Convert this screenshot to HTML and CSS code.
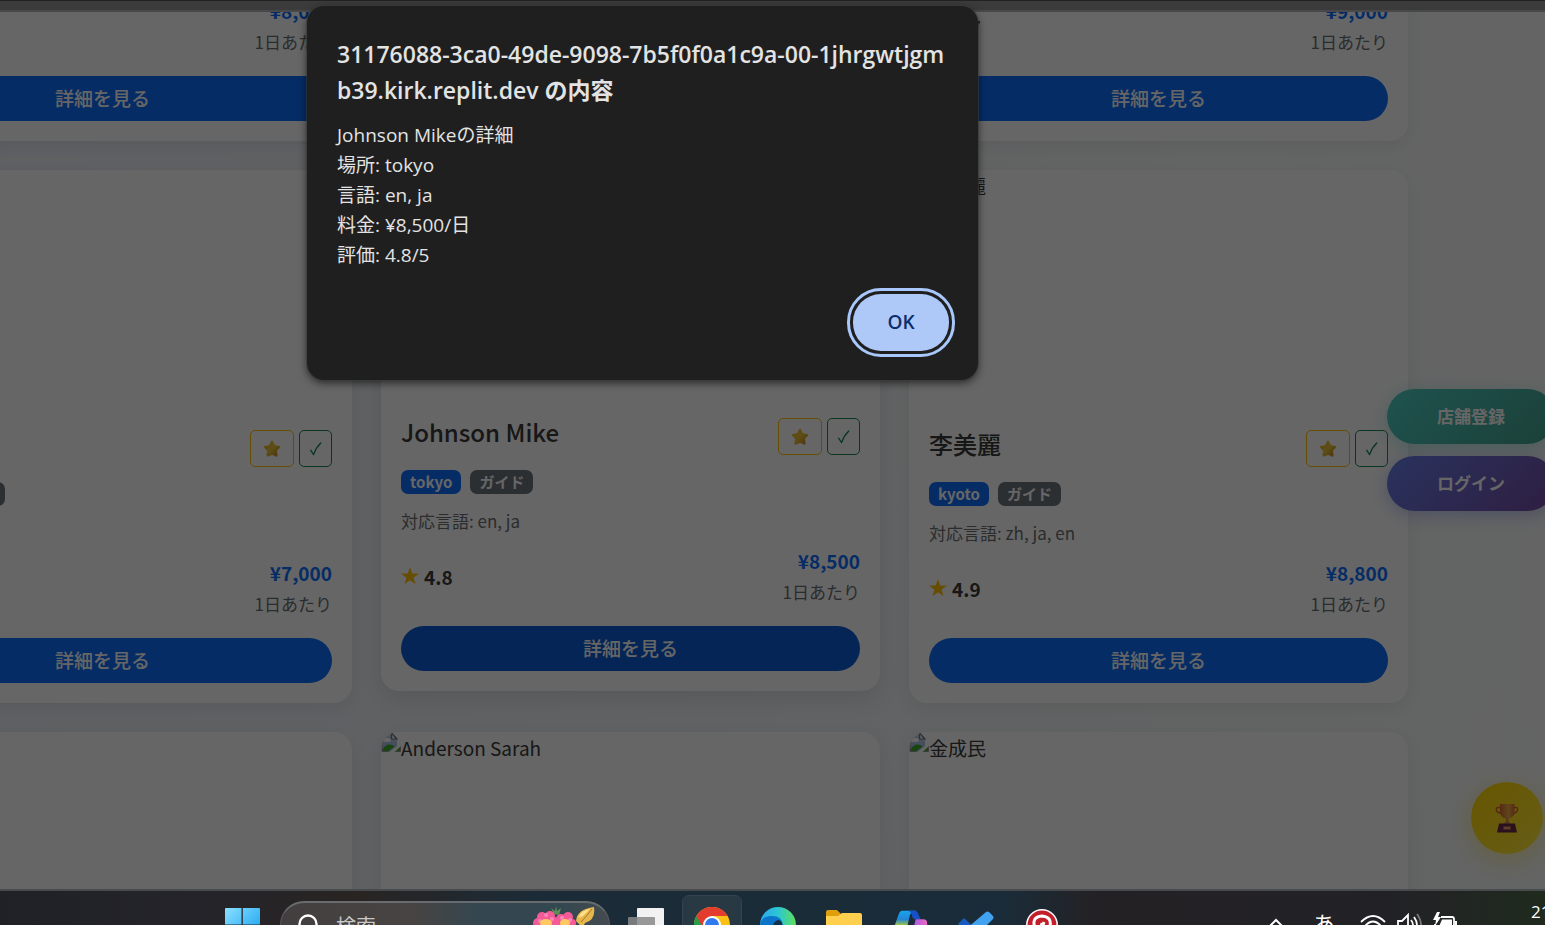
FILE: index.html
```html
<!DOCTYPE html>
<html lang="ja">
<head>
<meta charset="utf-8">
<title>ガイド一覧</title>
<link rel="stylesheet" href="styles.css">
</head>
<body>
<svg class="sprite" aria-hidden="true">
  <defs>
    <linearGradient id="g-star" x1="0" y1="0" x2="1" y2="1"><stop offset="0" stop-color="#f2b52d"/><stop offset=".5" stop-color="#e8c234"/><stop offset="1" stop-color="#c9832a"/></linearGradient>
    <linearGradient id="g-cup" x1="0" y1="0" x2="1" y2="0"><stop offset="0" stop-color="#d8662f"/><stop offset=".6" stop-color="#efb04a"/><stop offset="1" stop-color="#d8662f"/></linearGradient>
    <linearGradient id="g-sky" x1="0" y1="0" x2="0" y2="1"><stop offset="0" stop-color="#c5d3f3"/><stop offset="1" stop-color="#9fb4e4"/></linearGradient>
  </defs>
  <symbol id="star-emoji" viewBox="0 0 20 20"><path d="M10 2.800 12.200 7.200 17 8 13.800 11.500 14.500 16.600 10 14.700 5.500 16.600 6.200 11.500 3 8 7.800 7.200Z" fill="url(#g-star)" stroke="url(#g-star)" stroke-width="2.200" stroke-linejoin="round"/></symbol>
  <symbol id="check" viewBox="0 0 14 16"><path d="M1.600 9.200 4.600 13.600 Q7 6.500 11.800 2" fill="none" stroke="currentColor" stroke-width="1.300" stroke-linecap="round" stroke-linejoin="round"/></symbol>
  <symbol id="rate-star" viewBox="0 0 18 18"><path d="M9 0 11.200 6.600H18L12.500 10.700 14.600 17.300 9 13.300 3.400 17.300 5.500 10.700 0 6.600H6.800Z" fill="#ffc107"/></symbol>
  <symbol id="broken" viewBox="0 0 20 20"><path d="M1 1H11L16 6V14L8 20H1Z" fill="url(#g-sky)"/><path d="M1 19.500Q3 13 8 12.500 12 12.500 13.500 14.500L7 19.500Z" fill="#3fae2a"/><path d="M16 19.500H14L19.500 14.500V19.500Z" fill="#3fae2a"/><path d="M1 1V19.500H7M14 19.500H19.500V14.500M1 1H11" fill="none" stroke="#999"/><path d="M10.500 1V7H16Z" fill="#eee" stroke="#777" stroke-width="1.200"/><ellipse cx="6" cy="8" rx="4" ry="2" fill="#fff"/></symbol>
</svg>

<div class="browser-bar"></div>

<main class="viewport">
  <section class="cards">
    <article class="card card-cut">
      <div class="card-body">
        <div class="meta"><span></span><div class="price-box"><div class="price">¥8,000</div><div class="per">1日あたり</div></div></div>
        <button class="detail">詳細を見る</button>
      </div>
    </article>
    <article class="card card-cut">
      <div class="card-body">
        <div class="meta"><span></span></div>
        <button class="detail">詳細を見る</button>
      </div>
    </article>
    <article class="card card-cut">
      <div class="card-body">
        <div class="meta"><div class="rating"><svg><use href="#rate-star"/></svg>4.7</div><div class="price-box"><div class="price">¥9,000</div><div class="per">1日あたり</div></div></div>
        <button class="detail">詳細を見る</button>
      </div>
    </article>

    <article class="card">
      <div class="photo"></div>
      <div class="card-body">
        <div class="head"><span></span><div class="acts"><button class="act fav" aria-label="お気に入り"><svg><use href="#star-emoji"/></svg></button><button class="act pick" aria-label="選択"><svg><use href="#check"/></svg></button></div></div>
        <div class="badges badges-cut"><span class="badge role">ガイド</span></div>
        <p class="langs"></p>
        <div class="meta"><span></span><div class="price-box"><div class="price">¥7,000</div><div class="per">1日あたり</div></div></div>
        <button class="detail">詳細を見る</button>
      </div>
    </article>
    <article class="card hovered">
      <div class="photo"></div>
      <div class="card-body">
        <div class="head"><h2>Johnson Mike</h2><div class="acts"><button class="act fav" aria-label="お気に入り"><svg><use href="#star-emoji"/></svg></button><button class="act pick" aria-label="選択"><svg><use href="#check"/></svg></button></div></div>
        <div class="badges"><span class="badge">tokyo</span><span class="badge role">ガイド</span></div>
        <p class="langs">対応言語: en, ja</p>
        <div class="meta"><div class="rating"><svg><use href="#rate-star"/></svg>4.8</div><div class="price-box"><div class="price">¥8,500</div><div class="per">1日あたり</div></div></div>
        <button class="detail">詳細を見る</button>
      </div>
    </article>
    <article class="card">
      <div class="photo"><svg><use href="#broken"/></svg>李美麗</div>
      <div class="card-body">
        <div class="head"><h2>李美麗</h2><div class="acts"><button class="act fav" aria-label="お気に入り"><svg><use href="#star-emoji"/></svg></button><button class="act pick" aria-label="選択"><svg><use href="#check"/></svg></button></div></div>
        <div class="badges"><span class="badge">kyoto</span><span class="badge role">ガイド</span></div>
        <p class="langs">対応言語: zh, ja, en</p>
        <div class="meta"><div class="rating"><svg><use href="#rate-star"/></svg>4.9</div><div class="price-box"><div class="price">¥8,800</div><div class="per">1日あたり</div></div></div>
        <button class="detail">詳細を見る</button>
      </div>
    </article>

    <article class="card"><div class="photo"></div></article>
    <article class="card"><div class="photo"><svg><use href="#broken"/></svg>Anderson Sarah</div></article>
    <article class="card"><div class="photo"><svg><use href="#broken"/></svg>金成民</div></article>
  </section>

  <nav class="side">
    <button class="side-btn shop">店舗登録</button>
    <button class="side-btn login">ログイン</button>
  </nav>
  <button class="trophy" aria-label="ランキング">
    <svg viewBox="0 0 24 30"><path d="M6 4.500H3Q1 4.500 1.400 7 2 10 7 10.500M18 4.500H21Q23 4.500 22.600 7 22 10 17 10.500" fill="none" stroke="#d8662f" stroke-width="1.400"/><path d="M5 1H19.500V8Q19.500 14 14 15.500H10.500Q5 14 5 8Z" fill="url(#g-cup)"/><path d="M11 15H13.500L13.500 18 15.500 21H8.500L11 18Z" fill="#e08a3c"/><path d="M4 20.500H20L22 29.500H2Z" fill="#6b2b4b"/><path d="M8.500 23.500H15.500V26.500H8.500Z" fill="#e0a070" stroke="#a85a50"/></svg>
  </button>
  <div class="scrim"></div>
</main>

<dialog class="alert" open aria-labelledby="alert-title">
  <h1 id="alert-title">31176088-3ca0-49de-9098-7b5f0f0a1c9a-00-1jhrgwtjgm<br>b39.kirk.replit.dev の内容</h1>
  <p>Johnson Mikeの詳細<br>場所: tokyo<br>言語: en, ja<br>料金: ¥8,500/日<br>評価: 4.8/5</p>
  <div class="alert-actions"><button class="ok">OK</button></div>
</dialog>

<footer class="taskbar">
  <div class="task-row">
    <button class="slot" aria-label="スタート"><svg viewBox="0 0 36 36"><defs><linearGradient id="g-win" x1="0" y1="0" x2="1" y2="1"><stop offset="0" stop-color="#8be0ff"/><stop offset="1" stop-color="#0a9bf0"/></linearGradient></defs><path d="M1 2Q1 1 2 1H17.500V17.500H1ZM18.800 1H35Q36 1 36 2V17.500H18.800ZM1 18.800H17.500V35H1ZM18.800 18.800H36V35H18.800Z" fill="url(#g-win)"/></svg></button>
    <label class="search">
      <svg class="lens" viewBox="0 0 24 24"><circle cx="13" cy="10" r="8.500" fill="none" stroke="#fff" stroke-width="2.400"/><path d="M7 17 1 23" stroke="#fff" stroke-width="2.400"/></svg>
      <input type="text" placeholder="検索" aria-label="検索">
      <svg class="bloom" viewBox="0 0 66 40">
        <path d="M22 8 19 2 23 5 24 0 25 5 29 2 27 9Z" fill="#5c8f55"/>
        <g fill="#f45a98"><circle cx="6" cy="17" r="5"/><circle cx="10" cy="11" r="5"/><circle cx="18" cy="10" r="5"/><circle cx="22" cy="16" r="5"/><circle cx="29" cy="13" r="5"/><circle cx="36" cy="11" r="5"/><circle cx="40" cy="17" r="4"/><circle cx="14" cy="21" r="11"/><circle cx="33" cy="21" r="10"/></g>
        <g fill="#ff86b4"><circle cx="8" cy="15" r="2"/><circle cx="14" cy="9" r="2"/><circle cx="20" cy="13" r="2"/><circle cx="30" cy="12" r="2"/><circle cx="38" cy="14" r="2"/></g>
        <ellipse cx="14" cy="17" rx="6" ry="4" fill="#ffc861"/><ellipse cx="33" cy="17" rx="5" ry="4" fill="#ffc861"/>
        <path d="M44 15Q45 3 62 1 64 14 53 17L50 23 47 18Z" fill="#e6b74c"/><path d="M49 16Q54 11 60 3" fill="none" stroke="#a87722"/><path d="M46 12Q49 4 58 3L51 10Z" fill="#ffe08a"/>
      </svg>
    </label>
    <button class="slot" aria-label="タスクビュー"><svg viewBox="0 0 36 36"><rect x="9" y="1" width="27" height="24" rx="1" fill="#f2f2f2"/><rect x="0" y="10" width="27" height="22" rx="1" fill="#888" opacity=".85"/></svg></button>
    <button class="slot active" aria-label="Chrome"><svg viewBox="0 0 36 36"><circle cx="18" cy="18" r="18" fill="#fbc116"/><path d="M18 18 2.400 9A18 18 0 0 0 18 36L26 22Z" fill="#2a9d48"/><path d="M18 18 2.400 9A18 18 0 0 1 33.600 9H18Z" fill="#e33b2e"/><path d="M2.400 9 10.200 22.500 18 9Z" fill="#e33b2e"/><circle cx="18" cy="18" r="9" fill="#fff"/><circle cx="18" cy="18" r="7" fill="#3079ee"/></svg></button>
    <button class="slot" aria-label="Edge"><svg viewBox="0 0 36 36"><defs><linearGradient id="g-edge"><stop offset="0" stop-color="#2aa8ee"/><stop offset=".5" stop-color="#2cc6d4"/><stop offset="1" stop-color="#5fe05a"/></linearGradient></defs><circle cx="18" cy="18" r="18" fill="url(#g-edge)"/><path d="M0 18Q1 9 12 9 22 9 23 18L20 24 36 26A18 18 0 0 1 0 18Z" fill="#0c75c9"/><path d="M13 20Q13 14 19 13 23 15 22 19L19 24Z" fill="#173049"/></svg></button>
    <button class="slot" aria-label="エクスプローラー"><svg viewBox="0 0 36 36"><path d="M0 5Q0 3 2 3H11L15 7H20V12H0Z" fill="#df9e0b"/><path d="M0 9H12L16 6H34Q36 6 36 8V32H0Z" fill="#ffcf4d"/></svg></button>
    <button class="slot" aria-label="Copilot"><svg viewBox="0 0 38 36"><defs><linearGradient id="g-co" x1="0" y1="0" x2="0" y2="1"><stop offset="0" stop-color="#18a3f0"/><stop offset=".35" stop-color="#2386d5"/><stop offset=".6" stop-color="#a8c93c"/></linearGradient><linearGradient id="g-pk"><stop offset="0" stop-color="#9b57f0"/><stop offset="1" stop-color="#ea6ac0"/></linearGradient></defs><path d="M11 3H25L19 7 14 29H2Q0 25 3 18L7 7Q8 3 11 3Z" fill="url(#g-co)"/><path d="M18 3H24Q27 3 28 7L30 12H24Q21 11 21 7Z" fill="#174fc8"/><path d="M25 12H33Q38 12 37 18L33 32H20Z" fill="url(#g-pk)"/></svg></button>
    <button class="slot" aria-label="To Do"><svg viewBox="0 0 36 36"><path d="M0 17 6 11 18 22 12 28Z" fill="#185abd"/><path d="M12 28 8 22 28 5Q29.500 4 31 5L35 9Q36 10.500 35 12L16 31Z" fill="#41a3ef"/></svg></button>
    <button class="slot" aria-label="Pinterest"><svg viewBox="0 0 36 36"><circle cx="18" cy="18" r="16" fill="#fff"/><circle cx="18" cy="18" r="14.500" fill="#c31f2a"/><path d="M11 21Q7 10 18 9 28 10 26 19 23 25 18 21L20 15M18 16 15 30" fill="none" stroke="#fff" stroke-width="3"/></svg></button>
    <div class="tray">
      <svg class="chev" viewBox="0 0 14 14"><path d="M1 8 7 2 13 8" fill="none" stroke="#fff" stroke-width="2"/></svg>
      <span class="ime">あ</span>
      <svg class="status" viewBox="0 0 26 26"><path d="M1 10Q13-2 25 10M5 14Q13 5 21 14M9 18Q13 14 17 18" fill="none" stroke="#fff" stroke-width="1.800"/></svg>
      <svg class="status" viewBox="0 0 26 26"><path d="M2 9H6L12 3V23L6 17H2Z" fill="none" stroke="#fff" stroke-width="1.800"/><path d="M15 8Q19 13 15 18" fill="none" stroke="#fff" stroke-width="1.800"/><path d="M18 5Q24 13 18 21" fill="none" stroke="#fff" stroke-width="1.800"/><path d="M21 2Q29 13 21 24" fill="none" stroke="#777" stroke-width="1.800"/></svg>
      <svg class="status" viewBox="0 0 26 26"><path d="M9 5H20Q22 5 22 7V17Q22 19 20 19H3V12" fill="none" stroke="#fff" stroke-width="1.800"/><path d="M10 7.500H20V17H6Z" fill="#fff"/><path d="M23 9H25V15H23Z" fill="#fff"/><path d="M5 0 1 8H4L3 14 9 5H6L8 0Z" fill="#fff"/></svg>
      <span class="clock">21</span>
    </div>
  </div>
</footer>
</body>
</html>
```
FILE: styles.css
```css
* { box-sizing: border-box; }

body {
  margin: 0;
  height: 100vh;
  display: flex;
  flex-direction: column;
  overflow: hidden;
  background: #3b3b3b;
  color: #3a3a3a;
  font-family: "Noto Sans CJK JP", sans-serif;
  font-size: 19px;
  line-height: 29px;
}

button { font: inherit; cursor: pointer; }
h1, h2, p { margin: 0; }
.sprite { position: absolute; width: 0; height: 0; }

.browser-bar {
  flex: none;
  height: 12px;
  border-top: 1px solid #222;
  border-bottom: 2px solid #484848;
}

/* Page content */
.viewport {
  position: relative;
  flex: 1;
  min-height: 0;
  overflow: hidden;
  background:
    radial-gradient(circle at 80% 20%, rgba(255, 255, 255, .4), transparent 60%),
    linear-gradient(90deg, #eef1f8, #f3f6f8 60%, #f8faf9);
}

.cards {
  display: grid;
  grid-template-columns: repeat(3, minmax(0, 1fr));
  gap: 29px;
  margin: -15px 137px 0 -147px;
}

.card {
  background: #fff;
  border-radius: 18px;
  box-shadow: 0 5px 20px rgba(0, 0, 0, .08);
  overflow: hidden;
}

.hovered {
  transform: translateY(-12px);
  box-shadow: 0 8px 24px rgba(0, 0, 0, .1);
}

.photo {
  display: flex;
  height: 240px;
  line-height: 32px;
}
.photo svg { width: 20px; height: 20px; flex: none; }

.card-body {
  display: flex;
  flex-direction: column;
  padding: 20px;
}
.card-cut { border-radius: 0 0 18px 18px; }
.card-cut .card-body { padding-top: 0; }

.head {
  display: flex;
  justify-content: space-between;
  height: 37px;
  margin-bottom: 15px;
}
.head h2 { font-size: 24px; line-height: 28px; font-weight: 500; }

.acts { display: flex; gap: 5px; }
.act {
  display: flex;
  align-items: center;
  justify-content: center;
  height: 37px;
  padding: 0;
  background: none;
  border: 1px solid;
  border-radius: 5px;
}
.fav { width: 44px; color: #ffc107; }
.fav svg { width: 20px; height: 20px; }
.pick { width: 33px; color: #198754; }
.pick svg { width: 14px; height: 16px; }

.badges { display: flex; gap: 9px; height: 24px; margin-bottom: 14px; }
.badges-cut { padding-left: 69px; }
.badge {
  padding: 0 9px;
  border-radius: 7px;
  background: #0d6efd;
  color: #fff;
  font-size: 15px;
  line-height: 24px;
  font-weight: 700;
}
.role { background: #6c757d; }

.langs {
  height: 28px;
  margin-bottom: 11px;
  color: #6c6f72;
  font-size: 17px;
  line-height: 26px;
}

.meta {
  display: flex;
  align-items: center;
  justify-content: space-between;
  height: 60px;
  margin-bottom: 19px;
}
.rating { display: flex; align-items: center; gap: 5px; line-height: 27px; padding-bottom: 2px; font-weight: 700; }
.rating svg { width: 18px; height: 18px; }
.price-box { text-align: right; }
.price { color: #0d6efd; font-weight: 700; }
.per { color: #6c6f72; font-size: 17px; line-height: 33px; }

.detail {
  height: 45px;
  padding: 0 0 2px;
  border: 0;
  border-radius: 23px;
  background: #0d6efd;
  color: #fff;
  font-weight: 500;
}
.hovered .detail { background: #0b5ed7; }

.side {
  position: absolute;
  right: -10px;
  top: 377px;
  display: flex;
  flex-direction: column;
  gap: 12px;
}
.side-btn {
  width: 168px;
  height: 55px;
  padding: 0 0 2px;
  border: 0;
  border-radius: 28px;
  color: #fff;
  font-size: 17px;
  font-weight: 700;
}
.shop {
  background: linear-gradient(135deg, #4ecdc4, #44a08d);
  box-shadow: 0 4px 18px rgba(78, 205, 196, .4);
}
.login {
  background: linear-gradient(135deg, #667eea, #764ba2);
  box-shadow: 0 4px 18px rgba(102, 126, 234, .4);
}

.trophy {
  position: absolute;
  right: 2px;
  bottom: 35px;
  display: flex;
  align-items: center;
  justify-content: center;
  width: 72px;
  height: 72px;
  padding: 0;
  border: 0;
  border-radius: 50%;
  background: linear-gradient(135deg, #ffd700, #ffe83b);
  box-shadow: 0 5px 24px rgba(255, 215, 0, .4);
}
.trophy svg { width: 24px; height: 30px; }

.scrim {
  position: absolute;
  inset: 0;
  background: rgba(0, 0, 0, .6);
}

/* Browser alert */
.alert {
  position: absolute;
  left: 307px;
  top: 6px;
  right: auto;
  width: 671px;
  margin: 0;
  padding: 30px 29px 29px 30px;
  border: 0;
  border-radius: 17px;
  background: #1f1f1f;
  color: #e3e3e3;
  box-shadow: 0 0 0 1px rgba(60, 60, 60, .6), 0 3px 8px rgba(0, 0, 0, .6);
  font-family: "Open Sans", "Noto Sans CJK JP", sans-serif;
}
.alert h1 {
  margin-bottom: 12px;
  font-size: 23px;
  line-height: 36px;
  font-weight: 600;
  white-space: nowrap;
}
.alert p { line-height: 30px; }
.alert-actions { display: flex; justify-content: flex-end; margin-top: 24px; }
.ok {
  width: 96px;
  height: 57px;
  border: 0;
  border-radius: 28px;
  background: #aec9f8;
  color: #0b2e6f;
  font-weight: 600;
  outline: 3px solid #a8c7fa;
  outline-offset: 3px;
}

/* Windows taskbar */
.taskbar {
  flex: none;
  height: 36px;
  overflow: hidden;
  border-top: 2px solid #484b4d;
  background: linear-gradient(90deg, #202126, #24242a 13%, #292422 23%, #1b2c38 35%, #1a2c39 65%, #242124 71%, #222226 90%, #1f2a1d);
}
.task-row {
  display: flex;
  align-items: center;
  gap: 6px;
  height: 68px;
  padding-left: 212px;
}
.slot {
  display: flex;
  align-items: center;
  justify-content: center;
  flex: none;
  width: 60px;
  height: 60px;
  padding: 0;
  border: 1px solid transparent;
  border-radius: 7px;
  background: none;
}
.slot svg { width: 36px; height: 36px; }
.active { background: #293944; border-color: #34434d; }

.search {
  display: flex;
  align-items: center;
  flex: none;
  width: 330px;
  height: 48px;
  margin-left: 2px;
  padding: 0 11px 0 14px;
  border: 1px solid #58595b;
  border-top: 2px solid #686c6f;
  border-radius: 24px;
  background: linear-gradient(90deg, #433f40, #484442 40%, #344650 60%, #334751 85%, #454b50);
}
.lens { width: 24px; height: 24px; }
.search input {
  flex: 1;
  min-width: 0;
  padding: 0 0 0 17px;
  border: 0;
  background: none;
  color: #ddd;
  font: inherit;
  font-size: 20px;
}
.search input::placeholder { color: #c8c8c8; opacity: 1; }
.bloom { width: 66px; height: 40px; }

.tray {
  display: flex;
  align-items: center;
  gap: 10px;
  margin-left: auto;
  color: #fff;
}
.chev { width: 14px; height: 14px; margin-right: 20px; }
.ime { font-size: 22px; padding-bottom: 6px; margin-right: 15px; }
.status { width: 26px; height: 26px; }
.clock {
  width: 14px;
  margin-left: 63px;
  overflow: hidden;
  font-family: "Open Sans", sans-serif;
  font-size: 17px;
  line-height: 24px;
  padding-bottom: 26px;
}
```
